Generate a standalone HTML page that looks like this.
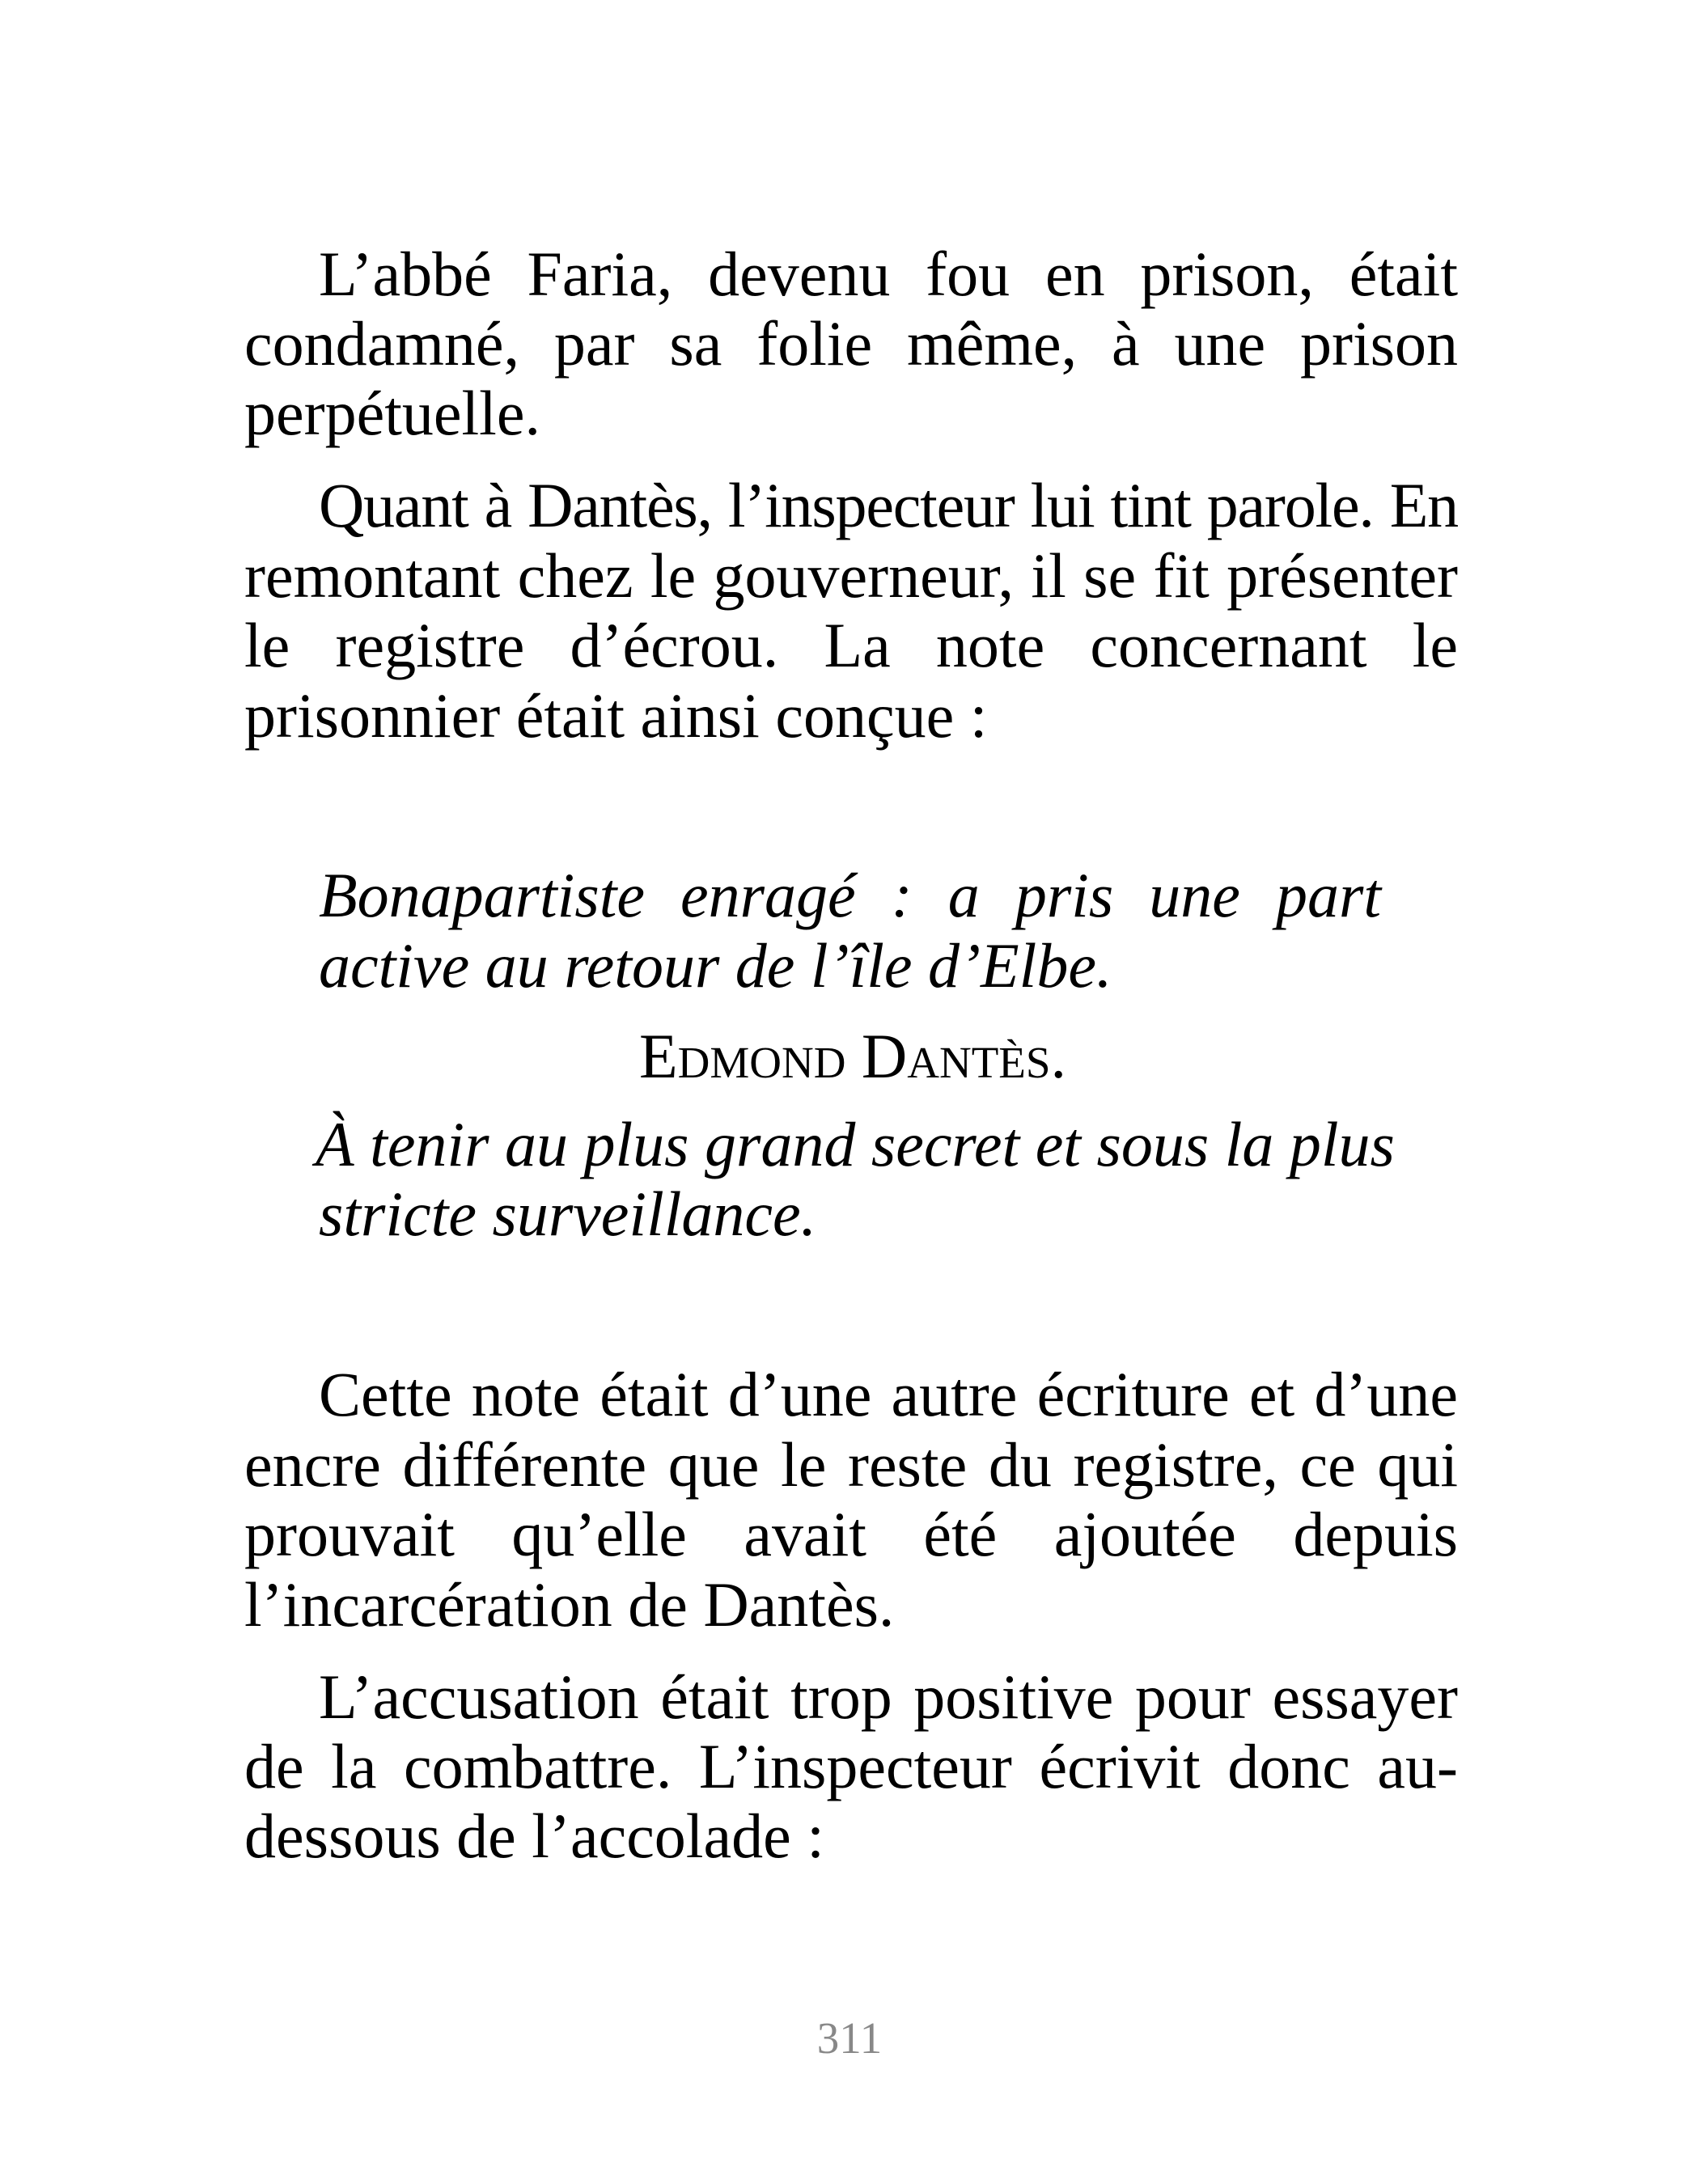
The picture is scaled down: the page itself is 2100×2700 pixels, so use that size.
<!DOCTYPE html>
<html><head><meta charset="utf-8"><style>
html,body{margin:0;padding:0;background:#fff;}
body{width:2100px;height:2700px;position:relative;overflow:hidden;font-family:"Liberation Serif",serif;color:#000;}
.l{position:absolute;left:302px;width:1500px;font-size:78px;line-height:86px;white-space:nowrap;margin-top:-6px;}
.j{text-align:justify;text-align-last:justify;white-space:normal;}
.i{font-style:italic;left:394px;width:1313px;}
.ind{left:394px;width:1408px;}
</style></head><body>
<div class="l ind j" style="top:302px">L’abbé Faria, devenu fou en prison, était</div>
<div class="l j" style="top:388px">condamné, par sa folie même, à une prison</div>
<div class="l" style="top:474px">perpétuelle.</div>

<div class="l ind j" style="top:588px;letter-spacing:-1.2px;height:86px;overflow:visible">Quant à Dantès, l’inspecteur lui tint parole. En</div>
<div class="l j" style="top:675px">remontant chez le gouverneur, il se fit présenter</div>
<div class="l j" style="top:761px">le registre d’écrou. La note concernant le</div>
<div class="l" style="top:848px">prisonnier était ainsi conçue :</div>

<div class="l i j" style="top:1070px">Bonapartiste enragé : a pris une part</div>
<div class="l i" style="top:1157px">active au retour de l’île d’Elbe.</div>
<div class="l" style="top:1269px;left:0;width:2108px;text-align:center;font-variant:small-caps;">Edmond Dantès.</div>
<div class="l i" style="top:1378px;left:390px">À tenir au plus grand secret et sous la plus</div>
<div class="l i" style="top:1464px">stricte surveillance.</div>

<div class="l ind j" style="top:1687px">Cette note était d’une autre écriture et d’une</div>
<div class="l j" style="top:1774px">encre différente que le reste du registre, ce qui</div>
<div class="l j" style="top:1860px">prouvait qu’elle avait été ajoutée depuis</div>
<div class="l" style="top:1947px">l’incarcération de Dantès.</div>

<div class="l ind j" style="top:2061px">L’accusation était trop positive pour essayer</div>
<div class="l j" style="top:2147px">de la combattre. L’inspecteur écrivit donc au-</div>
<div class="l" style="top:2233px">dessous de l’accolade :</div>

<div style="position:absolute;left:0;width:2100px;top:2490px;text-align:center;font-size:55px;line-height:60px;color:#888;">311</div>
</body></html>
